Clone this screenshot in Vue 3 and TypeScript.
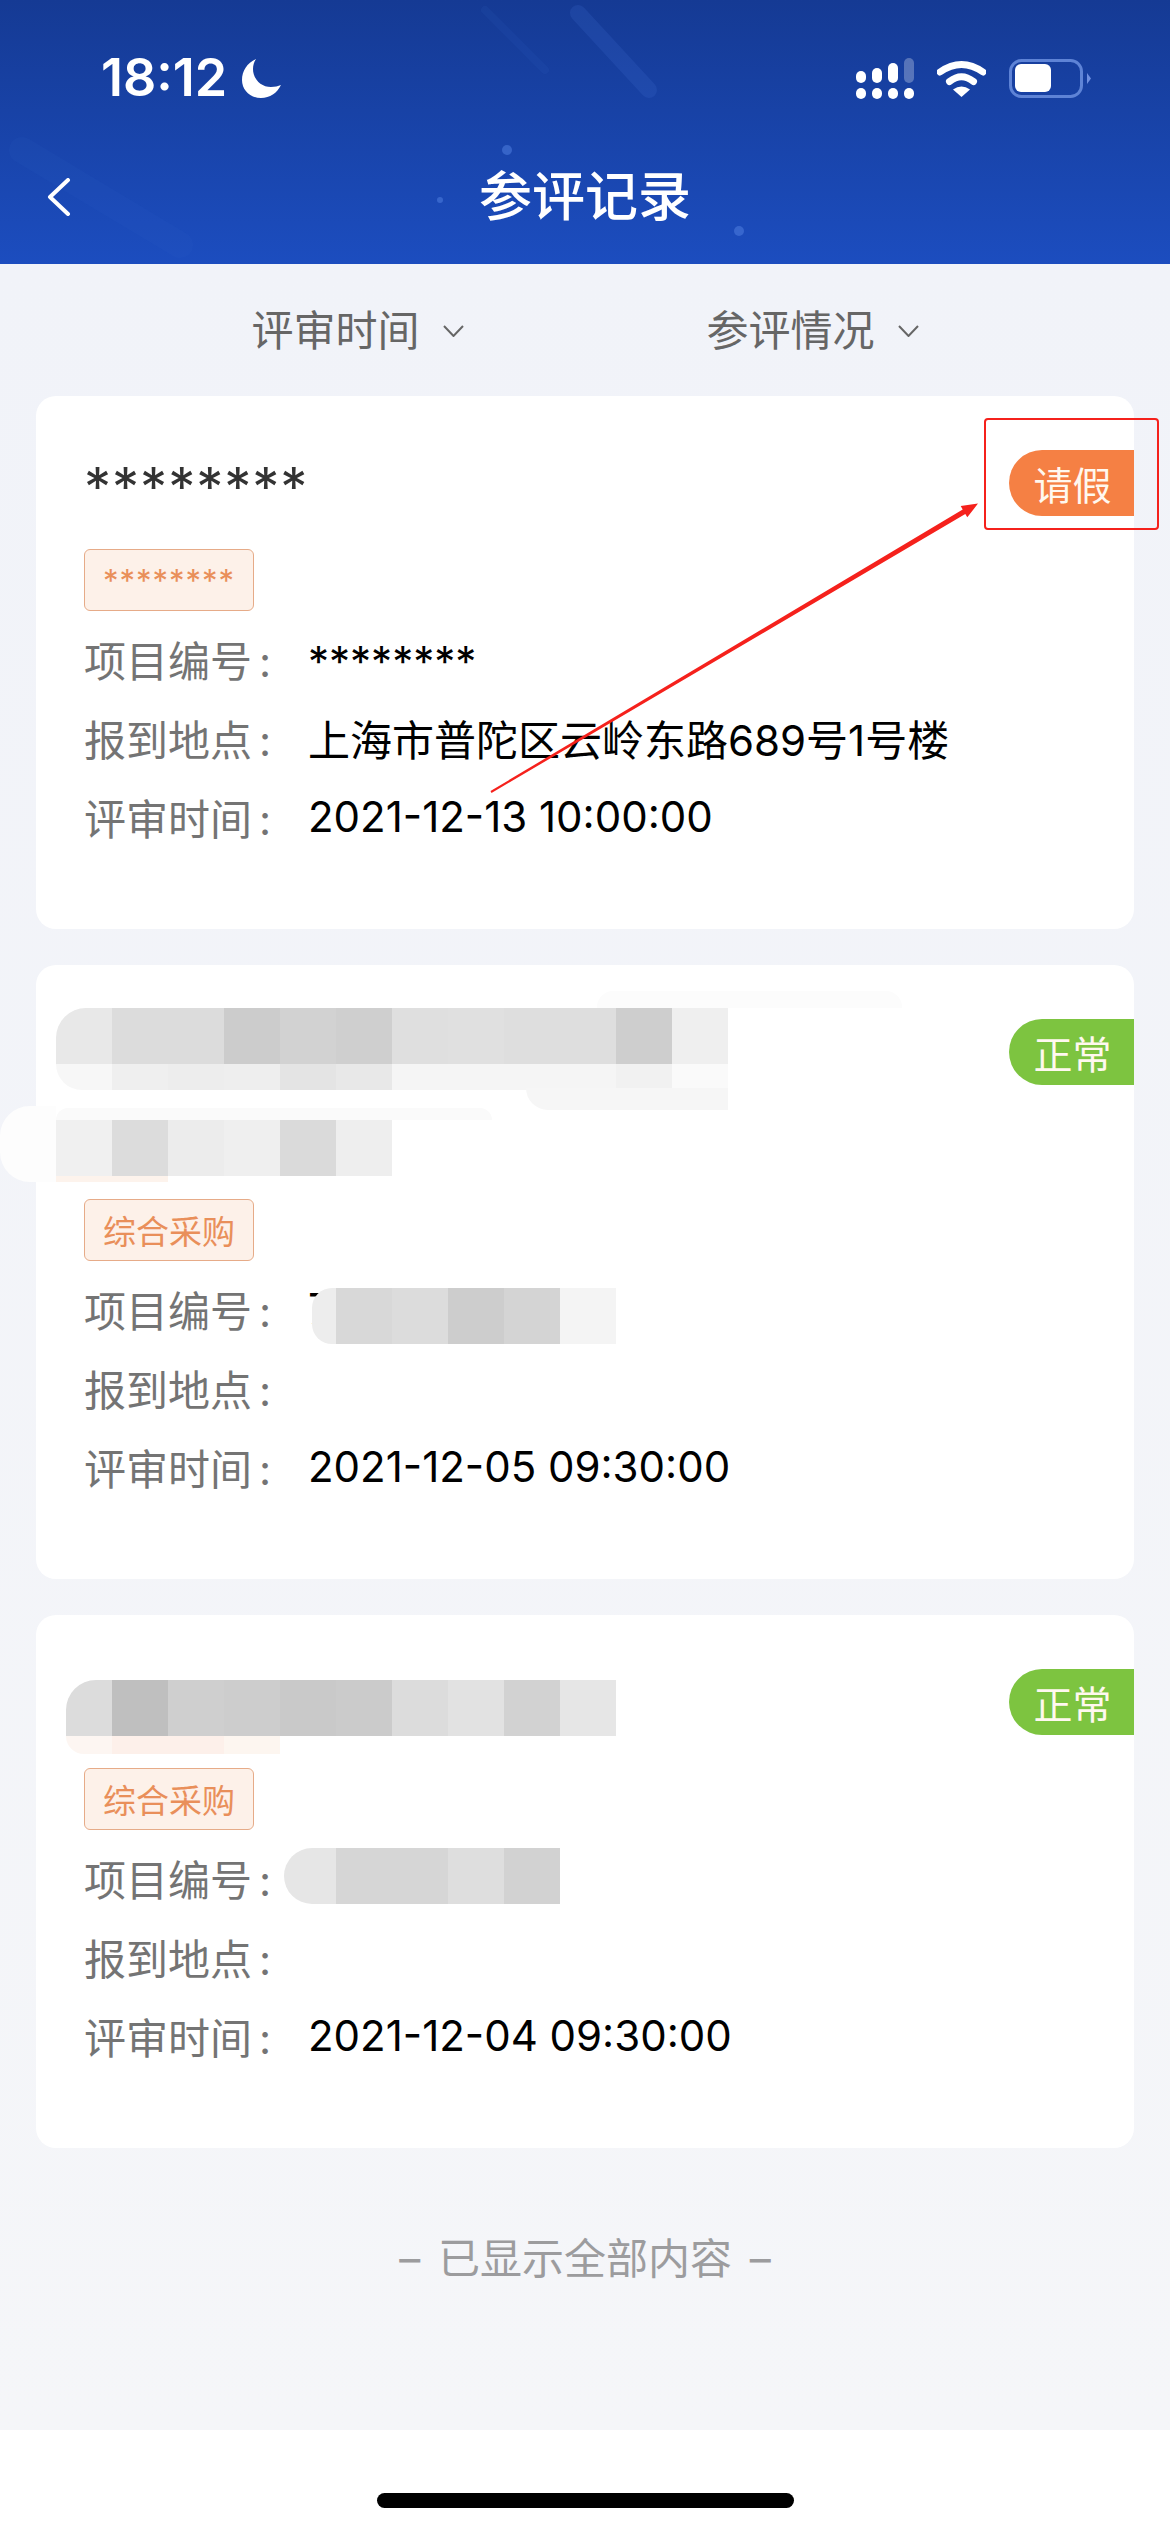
<template>
  <div class="page">
    <header class="top">
      <svg class="streaks" width="1170" height="264" viewBox="0 0 1170 264">
        <line x1="578" y1="13" x2="649" y2="90" stroke="#3f6dd0" stroke-opacity="0.2" stroke-width="16" stroke-linecap="round" />
        <line x1="485" y1="10" x2="545" y2="70" stroke="#3f6dd0" stroke-opacity="0.1" stroke-width="8" stroke-linecap="round" />
        <line x1="22" y1="150" x2="180" y2="245" stroke="#3f6dd0" stroke-opacity="0.07" stroke-width="26" stroke-linecap="round" />
        <circle cx="507" cy="150" r="5" fill="#4f7dde" fill-opacity="0.55" />
        <circle cx="440" cy="200" r="3" fill="#4f7dde" fill-opacity="0.55" />
        <circle cx="739" cy="231" r="5" fill="#4f7dde" fill-opacity="0.55" />
      </svg>
      <div class="status">
        <div class="clock">
          <span>18:12</span>
          <svg width="39" height="39" viewBox="0 0 39 39">
            <path fill="#fff" d="M14 0C5 4 0 12 0 21c0 10 8 18 19 18 9 0 16-5 20-13-3 1-6 2-10 2-10 0-18-8-18-18 0-4 1-7 3-10z" />
          </svg>
        </div>
        <div class="status-icons">
          <svg width="58" height="41" viewBox="0 0 58 41">
            <g fill="#fff">
              <rect x="0" y="13" width="10" height="12" rx="5" />
              <rect x="16" y="10" width="10" height="15" rx="5" />
              <rect x="32" y="5" width="10" height="20" rx="5" />
              <rect x="48" y="0" width="10" height="25" rx="5" fill-opacity="0.28" />
              <rect x="0" y="30" width="10" height="11" rx="5" />
              <rect x="16" y="30" width="10" height="11" rx="5" />
              <rect x="32" y="30" width="10" height="11" rx="5" />
              <rect x="48" y="30" width="10" height="11" rx="5" />
            </g>
          </svg>
          <svg width="49" height="37" viewBox="0 0 49 37">
            <path d="M3 12Q24.500-3 46 12" fill="none" stroke="#fff" stroke-width="7" stroke-linecap="round" />
            <path d="M12.500 21.500Q24.500 12 36.500 21.500" fill="none" stroke="#fff" stroke-width="7" stroke-linecap="round" />
            <path d="M16 29.500Q24.500 23.500 33 29.500L24.500 37z" fill="#fff" />
          </svg>
          <svg width="82" height="39" viewBox="0 0 82 39">
            <rect x="1.500" y="1.500" width="71" height="36" rx="11" fill="none" stroke="#5e83d6" stroke-width="3" />
            <rect x="6" y="5" width="36" height="28" rx="6" fill="#fff" />
            <path d="M78 14l4 5.500-4 5.500z" fill="#6f8fe0" />
          </svg>
        </div>
      </div>
      <div class="nav">
        <svg class="back" width="24" height="38" viewBox="0 0 24 38">
          <path d="M21 2L3 19l18 17" fill="none" stroke="#fff" stroke-width="4" stroke-linecap="round" stroke-linejoin="round" />
        </svg>
        <h1>参评记录</h1>
      </div>
    </header>

    <main class="body">
      <div class="filters">
        <div v-for="f in filters" :key="f" class="filter">
          <span>{{ f }}</span>
          <svg width="21" height="12" viewBox="0 0 21 12">
            <path d="M1 1l9.500 10L20 1" fill="none" stroke="#666" stroke-width="2" />
          </svg>
        </div>
      </div>

      <div class="list">
        <section v-for="(card, i) in cards" :key="i" class="card">
          <div class="title">
            <div v-for="(line, n) in card.title" :key="n" class="title-line">{{ line }}</div>
          </div>
          <div :class="['tag', { masked: card.tag === '********' }]">{{ card.tag }}</div>
          <div class="rows">
            <div class="row">
              <span class="label">项目编号<b>:</b></span>
              <span :class="['value', { masked: card.code === '********' }]">{{ card.code }}</span>
            </div>
            <div class="row">
              <span class="label">报到地点<b>:</b></span>
              <span class="value">{{ card.place }}</span>
            </div>
            <div class="row">
              <span class="label">评审时间<b>:</b></span>
              <span class="value">{{ card.time }}</span>
            </div>
          </div>
          <span :class="['badge', card.statusClass]">{{ card.status }}</span>
          <div
            v-for="(p, n) in card.patches"
            :key="n"
            class="patch"
            :style="{ left: p.x + 'px', top: p.y + 'px', height: p.h + 'px', borderRadius: p.radius || '0' }"
          >
            <i
              v-for="(c, k) in p.cells"
              :key="k"
              :style="{ background: c, width: (k === 0 && p.first ? p.first : 56) + 'px' }"
            ></i>
          </div>
        </section>
      </div>

      <p class="end">– 已显示全部内容 –</p>
    </main>

    <footer class="home">
      <div class="home-bar"></div>
    </footer>

    <svg class="markup" width="1170" height="2532" viewBox="0 0 1170 2532">
      <rect x="985" y="419" width="173" height="110" rx="3" fill="none" stroke="#f5211c" stroke-width="2" />
      <polygon fill="#f5211c" points="490.500,791 491.500,793 965.300,513.900 967.300,517.300 978,503.600 960.700,506.100 962.700,509.500" />
    </svg>
  </div>
</template>

<script setup lang="ts">
interface Patch {
  x: number
  y: number
  h: number
  first?: number
  radius?: string
  cells: string[]
}

interface Card {
  title: string[]
  tag: string
  code: string
  place: string
  time: string
  status: string
  statusClass: string
  patches: Patch[]
}

const filters = ['评审时间', '参评情况']

const cards: Card[] = [
  {
    title: ['********'],
    tag: '********',
    code: '********',
    place: '上海市普陀区云岭东路689号1号楼',
    time: '2021-12-13 10:00:00',
    status: '请假',
    statusClass: 'leave',
    patches: [],
  },
  {
    title: ['********', '********'],
    tag: '综合采购',
    code: '7',
    place: '',
    time: '2021-12-05 09:30:00',
    status: '正常',
    statusClass: 'ok',
    patches: [
      { x: 561, y: 26, h: 17, first: 305, radius: '16px 16px 0 0', cells: ['#fcfcfc'] },
      {
        x: 20, y: 43, h: 56, radius: '30px 0 0 0',
        cells: ['#e8e8e8', '#dcdcdc', '#dcdcdc', '#cccccc', '#d2d2d2', '#cfcfcf', '#dfdfdf', '#e0e0e0', '#dedede', '#dedede', '#cecece', '#efefef'],
      },
      {
        x: 20, y: 99, h: 26, radius: '0 0 0 30px',
        cells: ['#f7f7f7', '#efefef', '#ededed', '#eeeeee', '#e4e4e4', '#e8e8e8', '#f5f5f5', '#f5f5f5', '#f5f5f5', '#f5f5f5', '#f1f1f1', '#fafafa'],
      },
      { x: 490, y: 123, h: 22, first: 202, radius: '0 0 0 22px', cells: ['#f6f6f6'] },
      { x: -36, y: 141, h: 76, first: 56, radius: '30px 0 0 30px', cells: ['#fdfdfd'] },
      { x: 20, y: 143, h: 12, first: 436, radius: '20px 20px 0 0', cells: ['#fafafa'] },
      { x: 20, y: 155, h: 56, cells: ['#f0f0f0', '#dcdcdc', '#ececec', '#efefef', '#dadada', '#eeeeee'] },
      { x: 20, y: 211, h: 6, first: 112, cells: ['#fdf3ec'] },
      { x: 276, y: 323, h: 56, first: 24, radius: '20px 0 0 20px', cells: ['#ededed', '#d8d8d8', '#dcdcdc', '#cdcdcd', '#d4d4d4', '#f4f4f4'] },
    ],
  },
  {
    title: ['************'],
    tag: '综合采购',
    code: '',
    place: '',
    time: '2021-12-04 09:30:00',
    status: '正常',
    statusClass: 'ok',
    patches: [
      {
        x: 30, y: 65, h: 56, first: 46, radius: '30px 0 0 0',
        cells: ['#dcdcdc', '#bfbfbf', '#cfcfcf', '#cdcdcd', '#c9c9c9', '#cbcbcb', '#dcdcdc', '#e2e2e2', '#d2d2d2', '#e6e6e6'],
      },
      { x: 30, y: 121, h: 18, first: 46, radius: '0 0 0 30px', cells: ['#fdf6f2', '#fdf0ea', '#fdf0ea', '#fdf6f0'] },
      { x: 248, y: 233, h: 56, first: 52, radius: '30px 0 0 30px', cells: ['#e6e6e6', '#d6d6d6', '#d6d6d6', '#dedede', '#d2d2d2'] },
    ],
  },
]
</script>

<style>
body {
  background: #fff;
}
</style>

<style scoped>
.page {
  position: relative;
  width: 1170px;
  height: 2532px;
  display: flex;
  flex-direction: column;
  overflow: hidden;
  font-family: Inter, "Noto Sans CJK SC", sans-serif;
}

.top {
  position: relative;
  height: 264px;
  flex: none;
  color: #fff;
  background: linear-gradient(180deg, #153a94 0%, #1c4dbf 100%);
}

.streaks {
  position: absolute;
  left: 0;
  top: 0;
}

.status {
  position: relative;
  height: 130px;
  box-sizing: border-box;
  padding: 26px 79px 0 101px;
  display: flex;
  align-items: center;
  justify-content: space-between;
}

.clock {
  display: flex;
  align-items: center;
  gap: 15px;
  font-size: 52px;
  font-weight: 600;
  line-height: 1;
}

.status-icons {
  display: flex;
  align-items: center;
  gap: 23px;
}

.nav {
  position: relative;
  height: 134px;
  display: grid;
  grid-template-columns: 1fr auto 1fr;
  align-items: center;
}

.back {
  margin-left: 47px;
}

.nav h1 {
  margin: 0;
  font-size: 53px;
  font-weight: 500;
  line-height: 1;
}

.body {
  flex: 1;
  display: flex;
  flex-direction: column;
  background: linear-gradient(180deg, #f1f3f9 0%, #f5f6f9 100%);
}

.filters {
  height: 132px;
  flex: none;
  box-sizing: border-box;
  padding-bottom: 5px;
  display: flex;
  justify-content: center;
  align-items: center;
  gap: 243px;
}

.filter {
  display: flex;
  align-items: center;
  gap: 23px;
  font-size: 42px;
  color: #666;
}

.filter svg {
  margin-top: 6px;
}

.list {
  display: flex;
  flex-direction: column;
  gap: 36px;
  padding: 0 36px;
}

.card {
  position: relative;
  padding: 43px 48px 73px;
  background: #fff;
  border-radius: 20px;
}

.title-line {
  box-sizing: border-box;
  height: 81px;
  padding-top: 16px;
  font-size: 54px;
  line-height: 63px;
  color: #333;
  letter-spacing: 1px;
}

.tag {
  box-sizing: border-box;
  width: 170px;
  height: 62px;
  margin-top: 29px;
  display: flex;
  align-items: center;
  justify-content: center;
  font-size: 33px;
  color: #e98f5a;
  background: #fdf1e9;
  border: 1.5px solid #e6ab88;
  border-radius: 6px;
}

.tag.masked {
  font-size: 31px;
  letter-spacing: 1px;
}

.rows {
  margin-top: 8px;
}

.row {
  display: flex;
  height: 79px;
  align-items: center;
  font-size: 42px;
}

.label {
  width: 224px;
  flex: none;
  color: #747474;
}

.label b {
  margin-left: 7px;
  font-weight: 400;
}

.value {
  color: #000;
}

.value.masked {
  padding-top: 6px;
}

.badge {
  position: absolute;
  right: 0;
  top: 54px;
  width: 125px;
  height: 66px;
  box-sizing: border-box;
  padding-left: 2px;
  display: flex;
  align-items: center;
  justify-content: center;
  font-size: 39px;
  color: #fff8ef;
  border-radius: 33px 0 0 33px;
}

.badge.leave {
  background: #f58044;
}

.badge.ok {
  background: #7dc440;
}

.patch {
  position: absolute;
  display: flex;
  overflow: hidden;
}

.patch i {
  display: block;
  flex: none;
  height: 100%;
}

.end {
  margin: 86px 0 0;
  text-align: center;
  font-size: 42px;
  line-height: 50px;
  word-spacing: 6px;
  color: #9c9c9e;
}

.home {
  height: 102px;
  flex: none;
  box-sizing: border-box;
  padding-top: 63px;
  background: #fff;
  display: flex;
  justify-content: center;
}

.home-bar {
  width: 417px;
  height: 15px;
  border-radius: 8px;
  background: #000;
}

.markup {
  position: absolute;
  left: 0;
  top: 0;
  pointer-events: none;
}
</style>
